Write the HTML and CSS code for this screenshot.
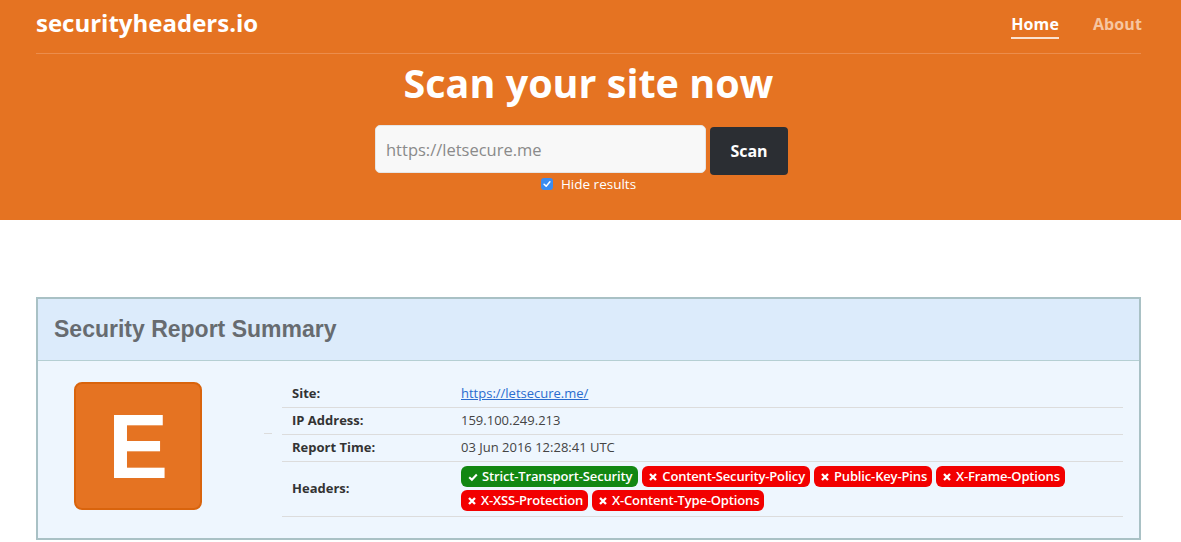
FILE: index.html
```html
<!DOCTYPE html>
<html lang="en">
<head>
<meta charset="utf-8">
<title>securityheaders.io</title>
<link rel="stylesheet" href="styles.css">
</head>
<body>
<header class="hero">
  <div class="topbar">
    <a class="brand" href="#">securityheaders.io</a>
    <nav class="nav">
      <a class="nav-link active" href="#">Home</a>
      <a class="nav-link" href="#">About</a>
    </nav>
  </div>
  <h1 class="hero-title">Scan your site now</h1>
  <form class="scan-form">
    <div class="scan-row">
      <input class="scan-input" type="text" placeholder="https://letsecure.me">
      <button class="scan-btn" type="button">Scan</button>
    </div>
    <label class="hide-opt"><span class="checkbox"><svg viewBox="0 0 12 12" width="10" height="10"><path d="M2.5 6.3 L5 8.6 L9.5 3.4" fill="none" stroke="#fff" stroke-width="1.8" stroke-linecap="round" stroke-linejoin="round"/></svg></span>Hide results</label>
  </form>
</header>

<main class="content">
  <section class="report">
    <div class="report-head">
      <h2 class="report-title">Security Report Summary</h2>
    </div>
    <div class="report-body">
      <div class="grade-col">
        <div class="grade">E</div>
      </div>
      <div class="spacer-col"><span class="spacer-line"></span></div>
      <table class="info">
        <tr><th>Site:</th><td><a class="site-link" href="#">https://letsecure.me/</a></td></tr>
        <tr><th>IP Address:</th><td>159.100.249.213</td></tr>
        <tr><th>Report Time:</th><td>03 Jun 2016 12:28:41 UTC</td></tr>
        <tr class="headers-row"><th>Headers:</th><td>
          <div class="badges">
            <span class="badge ok"><svg class="ico" viewBox="0 0 10 10"><path d="M1.2 5.2 L3.9 7.7 L8.8 2.5" fill="none" stroke="#fff" stroke-width="2.1"/></svg>Strict-Transport-Security</span>
            <span class="badge bad"><svg class="ico" viewBox="0 0 10 10"><path d="M2 2 L8 8 M8 2 L2 8" stroke="#fff" stroke-width="2.3"/></svg>Content-Security-Policy</span>
            <span class="badge bad"><svg class="ico" viewBox="0 0 10 10"><path d="M2 2 L8 8 M8 2 L2 8" stroke="#fff" stroke-width="2.3"/></svg>Public-Key-Pins</span>
            <span class="badge bad"><svg class="ico" viewBox="0 0 10 10"><path d="M2 2 L8 8 M8 2 L2 8" stroke="#fff" stroke-width="2.3"/></svg>X-Frame-Options</span>
            <span class="badge bad"><svg class="ico" viewBox="0 0 10 10"><path d="M2 2 L8 8 M8 2 L2 8" stroke="#fff" stroke-width="2.3"/></svg>X-XSS-Protection</span>
            <span class="badge bad"><svg class="ico" viewBox="0 0 10 10"><path d="M2 2 L8 8 M8 2 L2 8" stroke="#fff" stroke-width="2.3"/></svg>X-Content-Type-Options</span>
          </div>
        </td></tr>
      </table>
    </div>
  </section>
</main>
</body>
</html>
```

FILE: styles.css
```css
* { box-sizing: border-box; }
html, body { margin: 0; padding: 0; background: #fff; }
body { font-family: "Open Sans", "Liberation Sans", sans-serif; color: #333; font-size: 13px; }

.hero {
  background: #e57322;
  height: 220px;
  padding: 0 40px 0 36px;
}
.topbar {
  display: flex;
  justify-content: space-between;
  align-items: flex-start;
  border-bottom: 1px solid #ec8d4c;
  height: 54px;
}
.brand {
  color: #fff;
  text-decoration: none;
  font-weight: 700;
  font-size: 24px;
  line-height: 24px;
  margin-top: 11px;
}
.nav { display: flex; gap: 34px; margin-top: 14px; margin-right: -1px; }
.nav-link {
  color: #f6c6a1;
  font-weight: 700;
  font-size: 16px;
  line-height: 20px;
  text-decoration: none;
  padding-bottom: 3px;
  letter-spacing: 0.1px;
}
.nav-link.active { color: #fff; border-bottom: 2px solid #fbe3d2; }

.hero-title {
  margin: 5px 0 0;
  text-align: center;
  color: #fff;
  font-size: 39.5px;
  line-height: 48px;
  font-weight: 700;
}
.scan-form { display: flex; flex-direction: column; align-items: center; margin-top: 18px; }
.scan-row { display: flex; align-items: flex-start; gap: 4px; margin-left: -14px; }
.scan-input {
  width: 331px;
  height: 48px;
  border: 1px solid #e6e6e6;
  border-radius: 5px;
  background: #f8f8f8;
  padding: 0 10px;
  font-family: "Open Sans", sans-serif;
  font-size: 16.5px;
  color: #555;
}
.scan-input::placeholder { color: #8a8a8a; }
.scan-btn {
  margin-top: 2px;
  width: 78px;
  height: 48px;
  background: #2b2e33;
  color: #fff;
  border: 0;
  border-radius: 4px;
  font-family: "Open Sans", sans-serif;
  font-weight: 700;
  font-size: 16px;
}
.hide-opt {
  display: flex;
  align-items: center;
  gap: 8px;
  color: #fff;
  font-size: 13.5px;
  line-height: 18px;
  margin-top: 0;
}
.checkbox {
  width: 12px; height: 12px;
  border-radius: 3px;
  background: #3b8cf0;
  display: inline-flex; align-items: center; justify-content: center;
}

.content { padding: 77px 40px 0 36px; }
.report {
  border: 2px solid #a9c1c5;
  background: #eef6fe;
}
.report-head {
  background: #dcebfb;
  border-bottom: 1px solid #b5cfd3;
  height: 62px;
  display: flex;
  align-items: center;
  padding-left: 16px;
}
.report-title {
  margin: 0;
  font-family: "Liberation Sans", Arial, sans-serif;
  font-weight: 700;
  font-size: 23px;
  color: #676b70;
}
.report-body {
  display: flex;
  align-items: flex-start;
  padding: 19px 16px 21px 36px;
}
.grade-col { width: 128px; padding-top: 2px; }
.grade {
  width: 128px; height: 128px;
  background: #e57322;
  border: 2px solid #d9640d;
  border-radius: 8px;
  color: #fff;
  font-family: "Liberation Sans", Arial, sans-serif;
  font-weight: 700;
  font-size: 90px;
  padding-top: 2px;
  display: flex; align-items: center; justify-content: center;
}
.spacer-col { width: 80px; display: flex; flex-direction: column; padding-top: 53px; align-items: flex-start; padding-left: 62px; }
.spacer-line { width: 8px; border-top: 1px solid #dcdcdc; }
.info {
  flex: 1;
  border-collapse: collapse;
}
.info th, .info td {
  border-bottom: 1px solid #dcdcdc;
  text-align: left;
  padding: 4px 10px 4px 10px;
  height: 27px;
  line-height: 17px;
  vertical-align: middle;
}
.info th { width: 169px; font-weight: 700; color: #333; }
.info td { color: #444; }
.headers-row th, .headers-row td { height: 55px; padding-top: 4px; padding-bottom: 4px; }
.site-link { color: #2a6ccf; }
.badges { display: flex; flex-wrap: wrap; gap: 3px 4px; }
.badge {
  display: inline-flex;
  align-items: center;
  gap: 4px;
  height: 21px;
  padding: 0 5px 0 6px;
  border-radius: 6px;
  color: #fff;
  font-weight: 600;
  font-size: 13px;
  letter-spacing: -0.15px;
}
.badge.ok { background: #128712; padding: 0 6px 0 7px; }
.badge.bad { background: #f20000; }
.ico { width: 10px; height: 10px; }
```
